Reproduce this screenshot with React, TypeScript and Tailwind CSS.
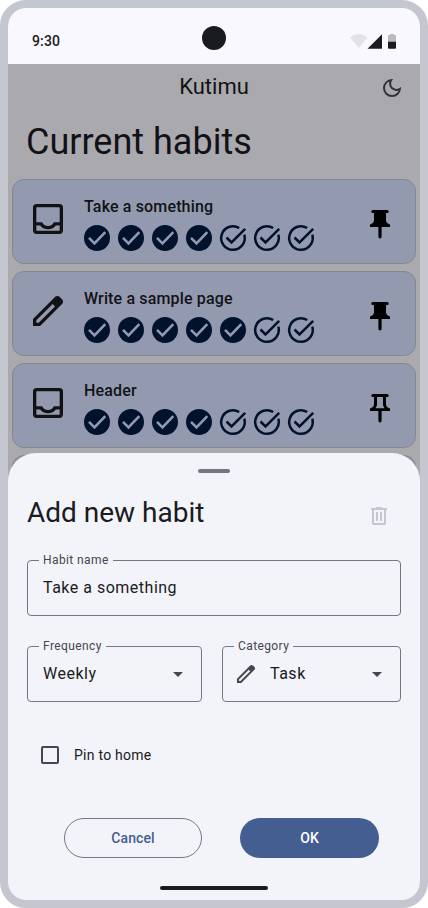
import React from "react";

function Check({ done }: { done: boolean }) {
  if (done) {
    return (
      <svg viewBox="0 0 26 26" className="size-[26px]" fill="none">
        <circle cx="13" cy="13" r="13" fill="#00122c" />
        <path d="M5 12.900 10.500 18.400 21.300 7.200" stroke="#939ab0" strokeWidth="2.600" />
      </svg>
    );
  }
  return (
    <svg viewBox="0 0 26 26" className="size-[26px] overflow-visible" fill="none" stroke="#00122c" strokeWidth="2.500">
      <path d="M19.200 3A11.800 11.800 0 1 0 24.300 9.700" />
      <path d="m6.500 12.500 5 5L25.200 3.800" />
    </svg>
  );
}

function Inbox() {
  return (
    <svg viewBox="0 0 24 24" className="size-10" fill="none" stroke="#121216" strokeWidth="2">
      <rect x="4" y="4" width="16" height="16" rx="1.200" />
      <path d="M4 14.900h3.900c.7 1.400 2.200 2.300 4.100 2.300s3.400-.9 4.100-2.300H20" />
    </svg>
  );
}

function Pencil({ className }: { className: string }) {
  return (
    <svg viewBox="0 -960 960 960" className={className}>
      <path d="M200-200h57l391-391-57-57-391 391v57Zm-80 80v-170l528-527q12-11 26.500-17t30.500-6q16 0 31 6t26 18l55 56q12 11 17.500 26t5.500 30q0 16-5.500 30.500T817-647L290-120H120Z" />
    </svg>
  );
}

const PIN_BODY =
  "M2.800 0h14.400q1.500 0 1.500 1.500T17.200 3H16v7c0 2.500 1.800 3.700 4 4.500V17h-8.400v9.800q0 1.600-1.600 1.600t-1.600-1.600V17H0v-2.500c2.200-.8 4-2 4-4.500V3H2.800q-1.500 0-1.500-1.500T2.800 0Z";
const PIN_HOLE = "M7 3h6v7c0 1.800.6 3 1.600 4.200H5.400C6.400 13 7 11.800 7 10Z";

function Pin({ filled }: { filled: boolean }) {
  return (
    <svg viewBox="0 0 20 29" className="h-[29px] w-5 fill-black">
      <path fillRule="evenodd" d={filled ? PIN_BODY : PIN_BODY + PIN_HOLE} />
    </svg>
  );
}

type Habit = { title: string; done: number; icon: "inbox" | "pencil"; pinned: boolean };

const habits: Habit[] = [
  { title: "Take a something", done: 4, icon: "inbox", pinned: true },
  { title: "Write a sample page", done: 5, icon: "pencil", pinned: true },
  { title: "Header", done: 4, icon: "inbox", pinned: false },
  { title: "", done: 0, icon: "inbox", pinned: false },
];

function HabitCard({ habit }: { habit: Habit }) {
  return (
    <div className="flex h-[85px] shrink-0 rounded-xl border border-[#858790] bg-[#939ab0] pl-[15px] pr-[25px]">
      <div className="pt-[19px]">
        {habit.icon === "inbox" ? <Inbox /> : <Pencil className="size-10 fill-[#121216]" />}
      </div>
      <div className="ml-4 flex-1 pt-[15px]">
        <div className="h-6 text-base font-medium leading-6 tracking-[0.150px]">{habit.title}</div>
        <div className="mt-1.5 flex gap-2">
          {Array.from({ length: 7 }, (_, i) => (
            <Check key={i} done={i < habit.done} />
          ))}
        </div>
      </div>
      <div className="pt-[30px]">
        <Pin filled={habit.pinned} />
      </div>
    </div>
  );
}

function Field({ label, className, children }: { label: string; className: string; children: React.ReactNode }) {
  return (
    <div className={`relative flex h-14 items-center rounded-[4px] border border-[#74777f] ${className}`}>
      <span className="absolute -top-[9px] left-[11px] bg-[#f3f3fa] px-1 text-xs leading-4 tracking-[0.400px] text-[#44474e]">
        {label}
      </span>
      {children}
    </div>
  );
}

function Arrow() {
  return (
    <svg viewBox="0 0 24 24" className="ml-auto size-6 fill-[#44474e]">
      <path d="m7 10 5 5 5-5Z" />
    </svg>
  );
}

export default function App() {
  return (
    <div className="h-[908px] w-[428px] bg-white font-['Roboto',sans-serif] text-[#1a1b20]">
      <div className="relative flex h-full flex-col overflow-hidden rounded-[26px] border-8 border-[#c4c6d0] bg-[#aaa9ad]">
        <header className="relative flex h-14 shrink-0 items-center bg-[#faf8ff] pl-6 pr-[23px] pt-2.5">
          <span className="text-sm font-medium leading-5 tracking-[0.140px]">9:30</span>
          <span className="absolute left-[194px] top-[18px] size-6 rounded-full bg-[#1a1b20]" />
          <svg viewBox="0 0 47 16" className="ml-auto h-4 w-[47px]">
            <path d="M0 4.500C5-.2 12.500-.2 17.500 4.500L8.750 15Z" fill="#e4e2e9" />
            <path d="M17.500 15.700 32 1.300v14.400Z" fill="#1a1b20" />
            <path d="M38 3q0-1 1-1h1V1h4v1h1q1 0 1 1v6h-8Z" fill="#bab9be" />
            <path d="M38 8.800h8v6q0 1-1 1h-6q-1 0-1-1Z" fill="#1a1b20" />
          </svg>
        </header>

        <main className="flex flex-col text-[#121216]">
          <div className="relative flex h-12 items-center justify-center">
            <h1 className="-mt-0.5 text-[22px] leading-7">Kutimu</h1>
            <svg viewBox="0 -960 960 960" className="absolute right-4 top-3 size-6 fill-[#303136]">
              <path d="M480-120q-150 0-255-105T120-480q0-150 105-255t255-105q14 0 27.500 1t26.500 3q-41 29-65.500 75.500T444-660q0 90 63 153t153 63q55 0 101-24.500t75-65.500q2 13 3 26.500t1 27.500q0 150-105 255T480-120Zm0-80q88 0 158-48.500T740-375q-20 5-40 8t-40 3q-123 0-209.500-86.500T364-660q0-20 3-40t8-40q-78 32-126.500 102T200-480q0 116 82 198t198 82Z" />
            </svg>
          </div>
          <h2 className="ml-[18px] mt-2 h-11 text-4xl leading-[44px]">Current habits</h2>
          <div className="mx-1 mt-[15px] flex flex-col gap-[7px]">
            {habits.map((h, i) => (
              <HabitCard key={i} habit={h} />
            ))}
          </div>
        </main>

        <section className="absolute inset-x-0 bottom-0 flex h-[447px] flex-col rounded-t-[28px] bg-[#f3f3fa] px-[19px]">
          <div className="mt-4 h-1 w-8 shrink-0 self-center rounded-full bg-[#74777f]" />
          <div className="mt-[22px] flex h-9 items-center">
            <h3 className="text-[28px] leading-9">Add new habit</h3>
            <svg viewBox="0 -960 960 960" className="ml-auto mr-[10px] mt-1.5 size-6 fill-[#c4c6d0]">
              <path d="M280-120q-33 0-56.500-23.500T200-200v-520h-40v-80h200v-40h240v40h200v80h-40v520q0 33-23.500 56.500T680-120H280Zm400-600H280v520h400v-520ZM360-280h80v-360h-80v360Zm160 0h80v-360h-80v360Z" />
            </svg>
          </div>
          <Field label="Habit name" className="mt-[29px] px-[15px]">
            <span className="text-base tracking-[0.500px]">Take a something</span>
          </Field>
          <div className="mt-[30px] flex gap-5">
            <Field label="Frequency" className="w-[175px] pl-[15px] pr-[11px]">
              <span className="text-base tracking-[0.500px]">Weekly</span>
              <Arrow />
            </Field>
            <Field label="Category" className="flex-1 px-[11px]">
              <Pencil className="size-6 fill-[#44474e]" />
              <span className="ml-3 text-base tracking-[0.500px]">Task</span>
              <Arrow />
            </Field>
          </div>
          <label className="ml-[14px] mt-11 flex h-[18px] items-center gap-[15px]">
            <span className="size-[18px] rounded-[2px] border-2 border-[#49454f]" />
            <span className="text-sm leading-5 tracking-[0.250px]">Pin to home</span>
          </label>
          <div className="ml-[37px] mt-[54px] flex gap-[38px]">
            <button className="h-10 w-[138px] rounded-full border border-[#74777f] text-sm font-medium tracking-[0.100px] text-[#445e91]">
              Cancel
            </button>
            <button className="h-10 w-[139px] rounded-full bg-[#445e91] text-sm font-medium tracking-[0.100px] text-white">
              OK
            </button>
          </div>
          <div className="mt-7 h-1 w-[108px] shrink-0 self-center rounded-full bg-[#1a1b20]" />
        </section>
      </div>
    </div>
  );
}
